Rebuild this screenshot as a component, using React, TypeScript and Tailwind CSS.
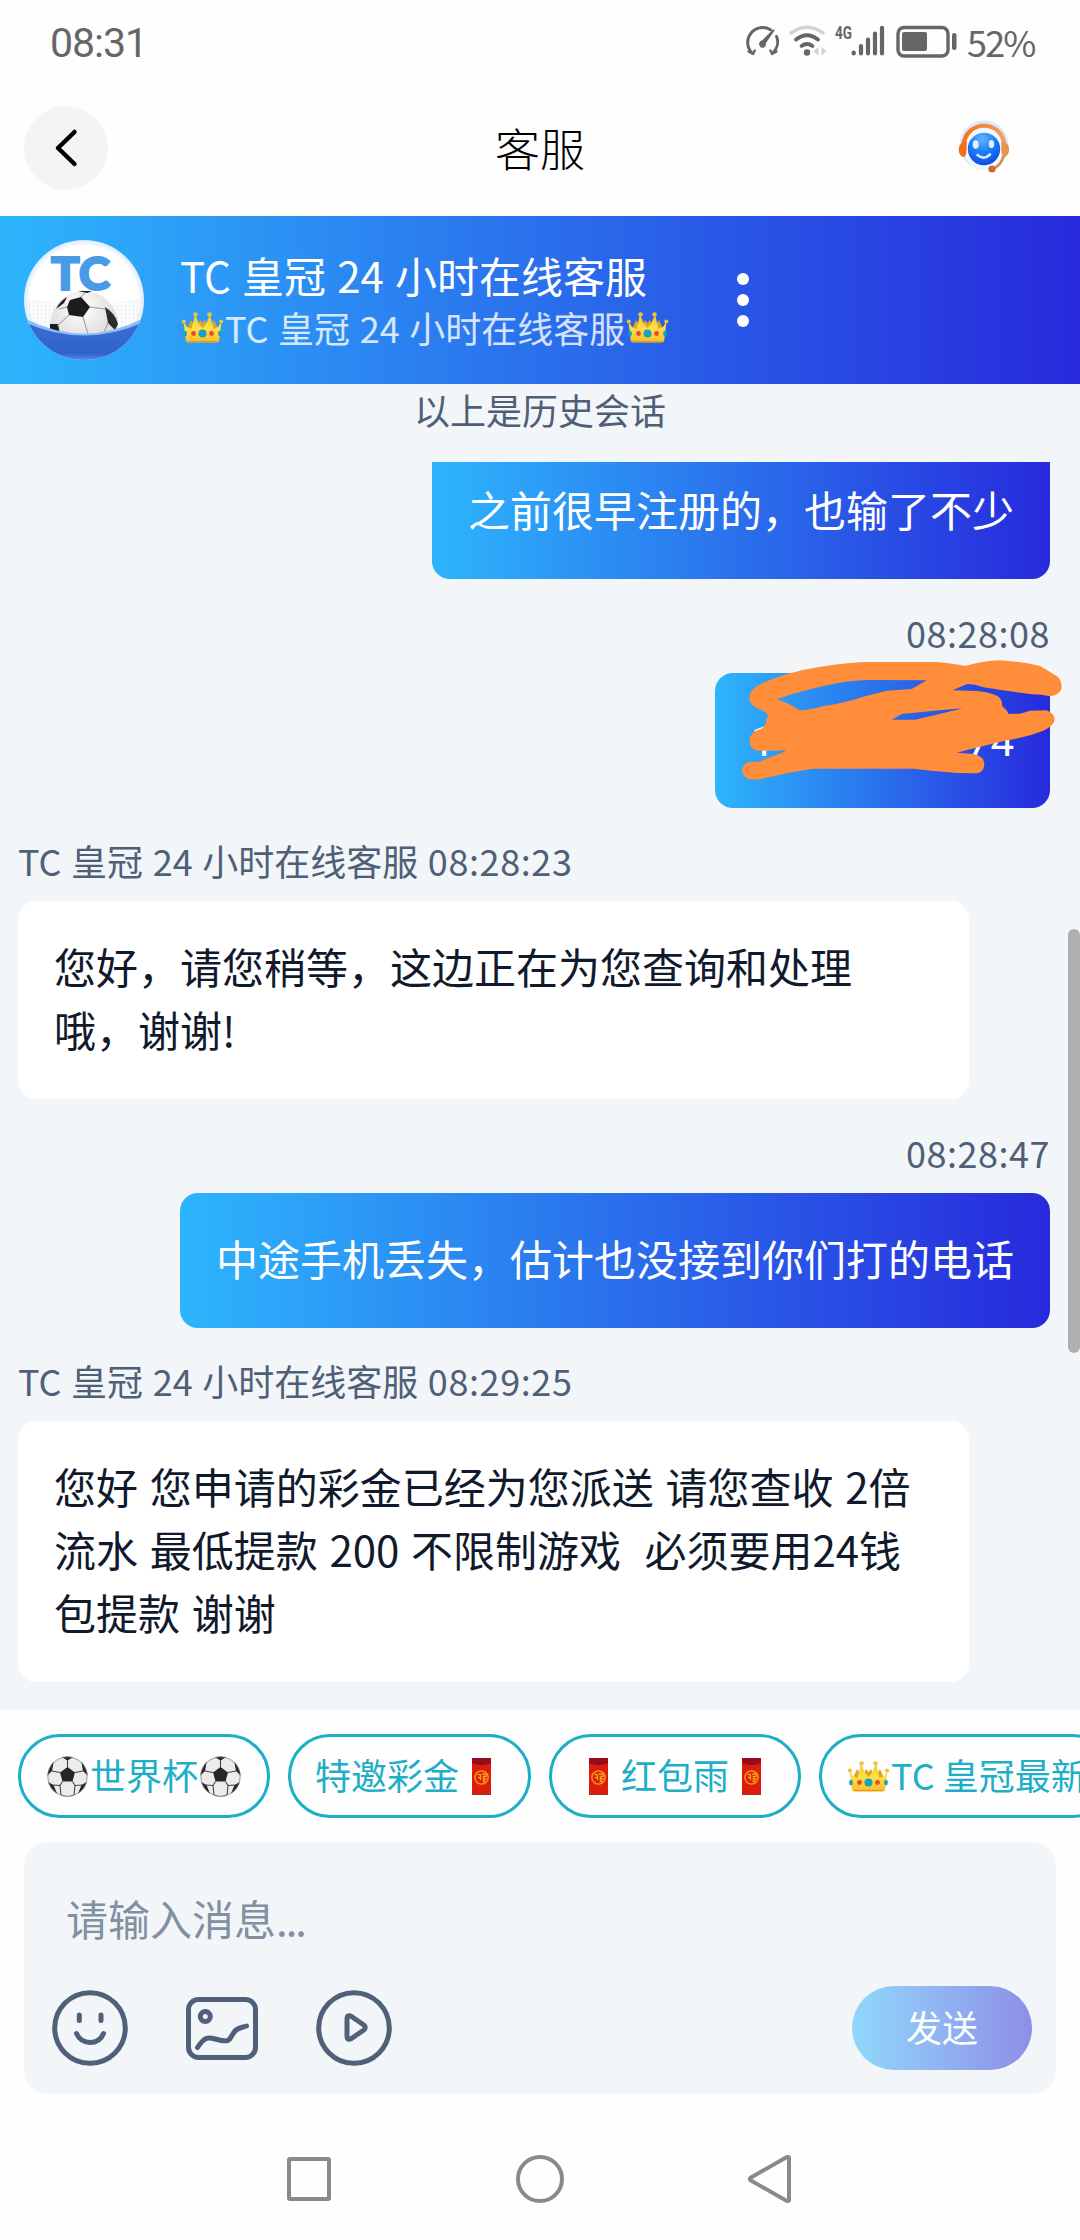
import type { ReactNode } from 'react';

const AGENT = 'TC 皇冠 24 小时在线客服';

function StatusIcons() {
  return (
    <svg width="214" height="40" viewBox="744 20 214 40" fill="none" stroke="#666" strokeLinecap="round">
      {/* speed gauge */}
      <path d="M770.5 29.7A15 15 0 0 0 751.5 52.5M776.6 36.5A15 15 0 0 1 773.2 52.5" strokeWidth="3" />
      <path d="M748.5 51.5l4.6 2.4 1.6-3.4M776.5 51.5l-4.4 2.4-1.8-3.4" strokeWidth="2.4" strokeLinejoin="round" />
      <path d="M773.2 29.3 774.8 30.3 765.6 43.6A3.2 3.2 0 1 1 760.6 42Z" fill="#666" stroke="none" />
      <circle cx="762.6" cy="43.6" r="3.2" fill="#666" stroke="none" />
      {/* wifi */}
      <path d="M791 33Q807 21.500 823 33" stroke="#d2d2d2" strokeWidth="3.400" />
      <path d="M796 39.500Q807 31 818 39.500" strokeWidth="3.800" />
      <path d="M801.500 46Q807 42 812.500 46" strokeWidth="3.800" />
      <circle cx="807" cy="52.500" r="3.200" fill="#666" stroke="none" />
      <path d="M818.500 47v8.500l-5-4.250zM821.500 47v8.500l5-4.250z" fill="#d2d2d2" stroke="none" />
      {/* signal */}
      <text
        x="835"
        y="39"
        fontSize="19"
        fontWeight="700"
        fill="#666"
        stroke="none"
        textLength="17"
        lengthAdjust="spacingAndGlyphs"
        fontFamily="Roboto, sans-serif"
      >
        4G
      </text>
      <path d="M853.700 52.500v1M861 46v7.500M868 39.500v14M875 33.500v20M882 27.800v25.700" strokeWidth="4.200" />
      {/* battery */}
      <rect x="898" y="27.500" width="50" height="28.500" rx="6" strokeWidth="3.400" />
      <rect x="902" y="32" width="25" height="19" rx="2" fill="#666" stroke="none" />
      <rect x="952" y="33" width="4.500" height="17" rx="2.200" fill="#666" stroke="none" />
    </svg>
  );
}

function SupportRobot() {
  return (
    <svg className="shrink-0" width="60" height="60" viewBox="0 0 60 60" fill="none">
      <defs>
        <radialGradient id="face" cx="0.45" cy="0.2" r="0.9">
          <stop offset="0" stopColor="#5fb5ff" />
          <stop offset="0.45" stopColor="#1c7cf5" />
          <stop offset="1" stopColor="#0a3fe0" />
        </radialGradient>
        <linearGradient id="band" x1="0" y1="0" x2="1" y2="0">
          <stop offset="0" stopColor="#f4731c" />
          <stop offset="1" stopColor="#e9a468" />
        </linearGradient>
      </defs>
      <circle cx="30" cy="27" r="24.500" fill="#dde8fa" />
      <circle cx="30" cy="30" r="21" fill="#f3f7fe" />
      <circle cx="30" cy="31" r="16.200" fill="url(#face)" />
      <path d="M9.500 28C11 1 49 1 50.500 28" stroke="url(#band)" strokeWidth="4.200" />
      <path d="M13 24C4 22 2 36 9 39 14 39.500 12 29 13 24Z" fill="#f26f18" />
      <path d="M47 24C56 22 58 36 51 39 46 39.500 48 29 47 24Z" fill="#e89550" />
      <path d="M49.500 38Q47 48 39 50.500" stroke="#d98d4a" strokeWidth="2.800" />
      <circle cx="38" cy="51" r="3.600" fill="#c6702f" />
      <ellipse cx="21.700" cy="26.500" rx="3" ry="4.200" fill="#e6eefb" />
      <ellipse cx="37.500" cy="26" rx="2.700" ry="4" fill="#e6eefb" />
      <path d="M23.500 37Q30 42.500 36 36.500" stroke="#d4ecff" strokeWidth="2.600" strokeLinecap="round" />
    </svg>
  );
}

function Avatar() {
  return (
    <svg className="shrink-0" width="120" height="120" viewBox="0 0 120 120">
      <defs>
        <clipPath id="avatarClip">
          <circle cx="60" cy="60" r="60" />
        </clipPath>
        <clipPath id="aboveWave">
          <path d="M0 0H120V80Q60 108 0 80Z" />
        </clipPath>
        <radialGradient id="rim">
          <stop offset="0.9" stopColor="#fff" />
          <stop offset="1" stopColor="#dceafc" />
        </radialGradient>
        <radialGradient id="leather" cx="0.45" cy="0.25" r="0.8">
          <stop offset="0" stopColor="#fff" />
          <stop offset="1" stopColor="#c9c9c9" />
        </radialGradient>
        <linearGradient id="sea" x1="0" y1="0" x2="0" y2="1">
          <stop offset="0" stopColor="#3a6fd8" />
          <stop offset="0.65" stopColor="#2f62cb" />
          <stop offset="0.8" stopColor="#5b8ee6" />
        </linearGradient>
        <pattern id="net" width="4" height="4" patternUnits="userSpaceOnUse">
          <path d="M0 1 4 3M2 0 1 4" stroke="#e3e9ee" strokeWidth="0.600" />
        </pattern>
      </defs>
      <g clipPath="url(#avatarClip)">
        <rect width="120" height="120" fill="url(#rim)" />
        <path d="M0 58 32 63V92L0 82ZM120 58 88 63V92L120 82Z" fill="url(#net)" />
        <g clipPath="url(#aboveWave)">
          <circle cx="60" cy="85" r="34" fill="url(#leather)" />
          <path d="M46 60 57 57 66 67 59 77 45 75 43 67Z" fill="#1c1c1c" />
          <path d="M81 67Q91 73 94 84L91 90 84 83Z" fill="#2c2c2c" />
          <path d="M32 69Q36 61 43 57L40 63Z" fill="#1c1c1c" />
          <path d="M26 84H34L36 94H26Z" fill="#1c1c1c" />
          <path d="M54 51H68L63 53Z" fill="#1c1c1c" />
          <path
            d="M57 57 62 52M66 67 81 69M59 77 64 94M45 75 33 86M84 83 80 92M43 67 35 69"
            fill="none"
            stroke="#8b8b8b"
            strokeWidth="0.900"
          />
        </g>
        <path d="M0 78Q60 109 120 78V130H0Z" fill="#8fbcf9" />
        <path d="M0 82Q60 109 120 82V130H0Z" fill="url(#sea)" />
      </g>
      <text
        x="27"
        y="49.500"
        fontSize="46"
        fontWeight="900"
        fill="#4a9be6"
        stroke="#4a9be6"
        strokeWidth="2"
        textLength="59"
        lengthAdjust="spacingAndGlyphs"
        fontFamily="Lato, sans-serif"
      >
        TC
      </text>
    </svg>
  );
}

function Crown() {
  return (
    <svg className="inline-block shrink-0" width="45" height="36" viewBox="0 0 45 36">
      <defs>
        <linearGradient id="gold" x1="0" y1="0" x2="0" y2="1">
          <stop offset="0" stopColor="#f3c62c" />
          <stop offset="0.500" stopColor="#fde046" />
          <stop offset="1" stopColor="#f9bd2a" />
        </linearGradient>
      </defs>
      <path d="M7 20 11 11 16 19 20 11 22.500 14 25 11 29 19 34 11 38 20V28H7Z" fill="#e3a424" />
      <path
        d="M3.500 12.500 7 18 11.500 20 15 5.500 19 15 22.500 19 26 15 30 5.500 33.500 20 38 18 41.500 12.500 39.300 31Q39 33.500 36.500 33.500H8.500Q6 33.500 5.700 31Z"
        fill="url(#gold)"
      />
      <g fill="#f3c22f">
        <circle cx="3.800" cy="12.500" r="2" />
        <circle cx="15.500" cy="5.500" r="2.300" />
        <circle cx="29.500" cy="5.500" r="2.300" />
        <circle cx="41.200" cy="12.500" r="2" />
      </g>
      <path d="M8 32.500H37" stroke="#e09a22" strokeWidth="1.200" />
      <circle cx="22.500" cy="24.500" r="4" fill="#1aa0c0" />
      <circle cx="13.500" cy="24.500" r="2.400" fill="#e8453c" />
      <circle cx="31.500" cy="24.500" r="2.400" fill="#e8453c" />
      <ellipse cx="5" cy="24.500" rx="1.900" ry="2.700" fill="#1aa0c0" />
      <ellipse cx="40" cy="24.500" rx="1.900" ry="2.700" fill="#1aa0c0" />
    </svg>
  );
}

function SoccerBall() {
  return (
    <svg className="shrink-0" width="45" height="45" viewBox="0 0 45 45">
      <defs>
        <clipPath id="ballClip">
          <circle cx="22.500" cy="22.500" r="20" />
        </clipPath>
      </defs>
      <circle cx="22.500" cy="22.500" r="20" fill="#ececec" />
      <g clipPath="url(#ballClip)">
        <g fill="#262626">
          <path d="M22.500 13 30 18.500 27.500 27.500H17.500L15 18.500Z" />
          <path d="M15 2H30L22.500 6.500Z" />
          <path d="M36 6 43.500 14V22.500L38 17Z" />
          <path d="M9 6 1.500 14V22.500L7 17Z" />
          <path d="M43.500 27 36.500 31 33 39.500 36 42Z" />
          <path d="M1.500 27 8.500 31 12 39.500 9 42Z" />
          <path d="M16 41 22.500 42.500 29 41V44H16Z" />
        </g>
        <path
          d="M22.500 6V14M30 18.500 38 17M27.500 27.500 30 31.500M17.500 27.500 15 31.500M15 18.500 7 17M30 31.500 29 41M15 31.500 16 41M37 31 30 31.500M8 31 15 31.500"
          fill="none"
          stroke="#444"
          strokeWidth="1.100"
        />
      </g>
      <circle cx="22.500" cy="22.500" r="19.600" fill="none" stroke="#777" strokeWidth="0.700" />
    </svg>
  );
}

function RedEnvelope() {
  return (
    <svg className="shrink-0" width="45" height="45" viewBox="0 0 45 45">
      <rect x="13" y="4" width="19" height="37" fill="#dc1c0c" />
      <path d="M13 4H32V9.500Q27 9.500 26 11H19Q18 9.500 13 9.500Z" fill="#980a1c" />
      <path d="M13 40.400H32" stroke="#a8321c" strokeWidth="1.200" />
      <g fill="none" stroke="#f8a01c" strokeWidth="1.300">
        <circle cx="22.500" cy="23.500" r="6.600" />
        <path d="M18.500 20.500H21.500V26M19 23.500H21M23 20H27V22.500H23.500M23.500 25H27.500M23.500 27.500H26.500M25 22.500V27.500" />
      </g>
    </svg>
  );
}

function Scribble() {
  return (
    <svg className="absolute -top-[73px] -left-[35px]" width="400" height="240" viewBox="0 0 1200 720">
      <path
        fill="#ff8d3a"
        fillRule="evenodd"
        d="M208 300C205 270 230 255 270 240C340 210 460 190 560 186L770 186Q820 190 855 198Q900 185 955 181Q1030 185 1080 198Q1110 215 1135 232Q1150 250 1143 270Q1130 290 1105 288L1085 284Q1050 284 910 262Q885 252 862 252L817 271L890 273Q945 278 960 295Q968 305 966 318Q980 328 986 342L1020 341L1050 332L1100 331Q1124 340 1124 360Q1120 378 1090 392Q1040 412 985 420Q900 440 830 458L880 462Q912 468 913 492Q912 518 890 520L830 519Q760 513 700 506L400 506Q330 515 235 539L210 538Q186 532 186 510Q190 486 215 485L240 485Q275 468 305 459L320 448L300 452L230 452Q208 444 208 420Q212 395 240 388Q258 380 258 366Q258 355 265 346Q258 335 245 330Q215 322 208 300ZM290 298Q370 270 470 250Q530 240 570 240L740 241L695 267L620 272L550 290Q490 310 430 318Q390 330 357 331Q325 308 290 298ZM635 359L665 342Q740 335 848 325Q770 345 705 359Z"
      />
    </svg>
  );
}

function SentBubble({ children }: { children: ReactNode }) {
  return (
    <div className="relative self-end mr-[30px] rounded-[18px] bg-linear-to-r/srgb from-[#2db5fc] to-[#272adc] px-9 pt-[33px] pb-[39px] text-[42px] leading-[63px] text-white">
      {children}
    </div>
  );
}

function SentTime({ children }: { children: ReactNode }) {
  return (
    <div className="self-end mr-[30px] pt-[26px] pb-[14px] text-[36px] leading-[54px] tracking-[0.5px] text-[#505f78]">
      {children}
    </div>
  );
}

function AgentMessage({ time, lines }: { time: string; lines: string[] }) {
  return (
    <div className="ml-[18px] flex flex-col">
      <div className="pt-[25px] pb-[14px] text-[36px] leading-[54px] text-[#505f78] [word-spacing:1.5px]">
        {AGENT} <span className="tracking-[0.6px]">{time}</span>
      </div>
      <div className="w-[951px] rounded-[18px] bg-white px-9 pt-[33px] pb-[39px] text-[42px] leading-[63px] text-[#111a2c] [word-spacing:2.3px]">
        {lines.map((line) => (
          <div key={line} className="whitespace-pre">{line}</div>
        ))}
      </div>
    </div>
  );
}

function QuickReply({ icon, label, endIcon }: { icon?: ReactNode; label: string; endIcon?: ReactNode }) {
  return (
    <div className="flex h-[84px] shrink-0 items-center whitespace-nowrap rounded-full border-3 border-[#1eaec8] px-6 text-[36px] leading-none text-[#1eaec8]">
      {icon}
      <span className="pb-1">{label}</span>
      {endIcon}
    </div>
  );
}

export default function App() {
  return (
    <div className="flex h-[2240px] w-[1080px] flex-col overflow-hidden bg-[#fefefe] font-['Noto_Sans_CJK_SC',sans-serif]">
      {/* Status bar */}
      <div className="flex h-[86px] shrink-0 items-center pl-[50px] pr-[45px] text-[#666]">
        <span className="font-['Roboto',sans-serif] text-[41px] leading-none tracking-[-1px]">08:31</span>
        <div className="ml-auto mb-[6px] flex items-center">
          <StatusIcons />
        </div>
        <span className="ml-[9px] w-[68px] whitespace-nowrap pb-[5px] text-[36px] leading-none tracking-[-1.8px]">52%</span>
      </div>

      {/* Title bar */}
      <div className="flex h-[130px] shrink-0 items-center pl-6 pr-[66px] pb-[6px]">
        <div className="flex h-[84px] w-[84px] shrink-0 items-center justify-center rounded-full bg-[#f4f4f4]">
          <svg width="84" height="84" viewBox="0 0 84 84" fill="none">
            <path d="M50.500 26 34 42 50.500 58" stroke="#000" strokeWidth="4.500" strokeLinecap="round" strokeLinejoin="round" />
          </svg>
        </div>
        <h1 className="flex-1 pb-[2px] pl-[18px] text-center text-[45px] font-light leading-none text-black">客服</h1>
        <SupportRobot />
      </div>

      {/* Agent header */}
      <div className="flex h-[168px] shrink-0 items-center bg-linear-to-r/srgb from-[#2db5fc] to-[#272adc] pl-6">
        <Avatar />
        <div className="ml-9 flex w-[491px] flex-col text-white">
          <div className="text-[42px] leading-[54px] [word-spacing:1.8px]">{AGENT}</div>
          <div className="flex items-center text-[36px] leading-[50px] text-white/80 [word-spacing:1.5px]">
            <Crown />
            <span>{AGENT}</span>
            <Crown />
          </div>
        </div>
        <div className="ml-[66px] flex flex-col gap-[9px]">
          <span className="h-3 w-3 rounded-full bg-white" />
          <span className="h-3 w-3 rounded-full bg-white" />
          <span className="h-3 w-3 rounded-full bg-white" />
        </div>
      </div>

      {/* Conversation */}
      <div className="relative flex h-[1326px] shrink-0 flex-col bg-[#f2f6f9]">
        <div className="h-[78px] shrink-0 text-center text-[36px] leading-[50px] text-[#505f78]">以上是历史会话</div>
        <div className="flex flex-1 flex-col overflow-hidden">
          <div className="-mt-[18px] flex flex-col">
            <SentBubble>之前很早注册的，也输了不少</SentBubble>
            <SentTime>08:28:08</SentTime>
            <SentBubble>
              <div className="flex h-[63px] w-[263px] justify-between pt-1 font-['Roboto',sans-serif]">
                <span>1</span>
                <span>74</span>
              </div>
              <Scribble />
            </SentBubble>
            <AgentMessage time="08:28:23" lines={['您好，请您稍等，这边正在为您查询和处理', '哦，谢谢!']} />
            <SentTime>08:28:47</SentTime>
            <SentBubble>中途手机丢失，估计也没接到你们打的电话</SentBubble>
            <AgentMessage
              time="08:29:25"
              lines={['您好 您申请的彩金已经为您派送 请您查收 2倍', '流水 最低提款 200 不限制游戏  必须要用24钱', '包提款 谢谢']}
            />
          </div>
        </div>
        <div className="absolute right-0 top-[545px] h-[424px] w-3 rounded-full bg-[#afafaf]" />
      </div>

      {/* Composer */}
      <div className="flex flex-1 flex-col bg-[#fefefe] shadow-[0_-3px_15px_rgba(0,0,0,0.05)]">
        <div className="flex gap-[18px] overflow-hidden pl-[18px] pt-6">
          <QuickReply icon={<SoccerBall />} label="世界杯" endIcon={<SoccerBall />} />
          <QuickReply label="特邀彩金" endIcon={<RedEnvelope />} />
          <QuickReply icon={<RedEnvelope />} label="红包雨" endIcon={<RedEnvelope />} />
          <QuickReply icon={<Crown />} label="TC 皇冠最新" />
        </div>

        <div className="mx-6 mt-6 flex h-[252px] shrink-0 flex-col rounded-3xl bg-[#f2f6f9]">
          <div className="pl-[42px] pt-[44px] text-[42px] leading-[63px] text-[#8290a2]">
            请输入消息<span className="tracking-[-2px]">...</span>
          </div>
          <div className="mt-[37px] flex items-center pl-[26px] pr-6">
            <svg width="80" height="80" viewBox="0 0 80 80" fill="none" stroke="#516079" strokeWidth="5" strokeLinecap="round">
              <circle cx="40" cy="40" r="35.300" />
              <path d="M29.300 27V32.500M51 27V32.500M26.500 45.500C32 57.500 48.500 57.500 53.500 45.500" />
            </svg>
            <svg className="ml-[52px]" width="80" height="80" viewBox="0 0 80 80" fill="none" stroke="#516079" strokeWidth="5" strokeLinecap="round">
              <rect x="6.500" y="11.500" width="67" height="58" rx="10" />
              <circle cx="23.300" cy="28.500" r="5" />
              <path d="M15.500 59.500C24 46 28 50 37 52C50 55 47 50 53 43C56 39.500 60 39.500 64.500 38" />
            </svg>
            <svg className="ml-[52px]" width="80" height="80" viewBox="0 0 80 80" fill="none" stroke="#516079" strokeWidth="5" strokeLinejoin="round">
              <circle cx="40" cy="40" r="35.300" />
              <path d="M33 31Q33 26 37.500 28.500L49.500 36.800Q53 39.500 49.500 42.300L37.500 50.500Q33 53 33 48Z" />
            </svg>
            <div className="ml-auto flex h-[84px] w-[180px] items-center justify-center rounded-full bg-linear-to-r/srgb from-[#91d8fb] to-[#8e8ee8] pb-1 text-[36px] leading-none text-white">
              发送
            </div>
          </div>
        </div>

        {/* System navigation */}
        <div className="flex flex-1 items-center justify-center gap-[183px] pt-[24px]">
          <svg width="48" height="48" viewBox="0 0 48 48" fill="none" stroke="#8a8a8a" strokeWidth="4" strokeLinejoin="round">
            <rect x="4" y="4" width="40" height="40" rx="1" />
          </svg>
          <svg width="48" height="48" viewBox="0 0 48 48" fill="none" stroke="#8a8a8a" strokeWidth="4">
            <circle cx="24" cy="24" r="22" />
          </svg>
          <svg width="48" height="48" viewBox="0 0 48 48" fill="none" stroke="#8a8a8a" strokeWidth="4" strokeLinejoin="round">
            <path d="M42 2.500V45.500Q41 46.500 39 45.500L4 25.500Q1.500 24 4 22.500L39 2.500Q41 1.500 42 2.500Z" />
          </svg>
        </div>
      </div>
    </div>
  );
}
